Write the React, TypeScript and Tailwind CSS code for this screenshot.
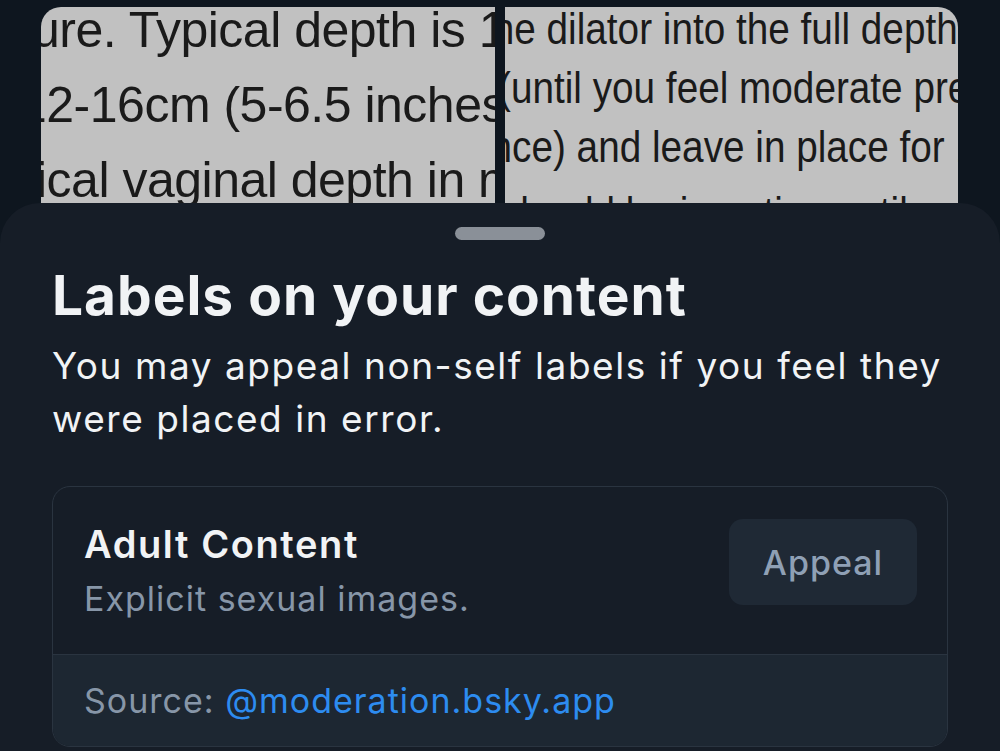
export default function App() {
  const leftLines = [
    { text: "ure. Typical depth is 12", ml: "ml-[-9px]" },
    { text: "12-16cm (5-6.5 inches)", ml: "ml-[-22px]" },
    { text: "ical vaginal depth in men", ml: "ml-[-5px]" },
  ];
  const rightLines = [
    { text: "the dilator into the full depth", ml: "ml-[-23px]" },
    { text: "(until you feel moderate pressure", ml: "ml-[-7px]" },
    { text: "ance) and leave in place for 1", ml: "ml-[-36px]" },
    { text: "should be inserting until only a", ml: "ml-[-4px] mt-[7px]" },
  ];

  return (
    <div className="h-[751px] w-[1000px] overflow-hidden bg-[#0e161f] font-['Inter',sans-serif]">
      {/* post images behind the sheet */}
      <div className="flex h-[203px] gap-[10px] pl-[41px] pr-[42px] pt-[7px]">
        <div className="h-[196px] flex-1 overflow-hidden rounded-tl-[20px] bg-[#c1c1c1] font-['Liberation_Sans',sans-serif] text-[50px] leading-[75px] tracking-[-0.5px] text-[#1a1a1a]">
          <div className="-mt-[14px]">
            {leftLines.map((l) => (
              <div key={l.text} className={`whitespace-nowrap ${l.ml}`}>
                {l.text}
              </div>
            ))}
          </div>
        </div>
        <div className="h-[196px] flex-1 overflow-hidden rounded-tr-[20px] bg-[#c1c1c1] font-['Liberation_Sans',sans-serif] text-[44px] leading-[59px] text-[#1a1a1a]">
          <div className="-mt-[8px]">
            {rightLines.map((l) => (
              <div key={l.text} className={`origin-left scale-x-[0.88] whitespace-nowrap ${l.ml}`}>
                {l.text}
              </div>
            ))}
          </div>
        </div>
      </div>

      {/* bottom sheet */}
      <div className="h-[548px] rounded-t-[40px] bg-[#161d27] px-[52px]">
        <div className="flex justify-center pt-[24px]">
          <div className="h-[13px] w-[90px] rounded-full bg-[#8a9098]" />
        </div>
        <h1 className="mt-[23px] text-[55px] font-bold leading-[64px] tracking-[1px] text-[#f1f3f5]">
          Labels on your content
        </h1>
        <p className="mt-[12px] text-[37px] leading-[53px] tracking-[1.55px] text-[#f1f3f5]">
          You may appeal non-self labels if you feel they were placed in error.
        </p>

        <div className="mt-[41px] overflow-hidden rounded-[18px] border border-[#2a3440]">
          <div className="flex h-[167px] items-start justify-between pl-[31px] pr-[30px] pt-[32px]">
            <div className="pt-[3px]">
              <div className="text-[38px] font-semibold leading-[44px] tracking-[1.6px] text-[#f1f3f5]">
                Adult Content
              </div>
              <div className="mt-[13px] text-[34px] leading-[40px] tracking-[1px] text-[#8796a8]">
                Explicit sexual images.
              </div>
            </div>
            <button className="flex h-[86px] w-[188px] items-center justify-center rounded-[14px] bg-[#1f2935] text-[34px] font-medium tracking-[1px] text-[#8fa0b5]">
              Appeal
            </button>
          </div>
          <div className="flex h-[92px] items-center border-t border-[#2a3440] bg-[#1d2732] pl-[31px] text-[34px] tracking-[1px] text-[#8796a8]">
            Source:&nbsp;<span className="text-[#2d8cf0]">@moderation.bsky.app</span>
          </div>
        </div>
      </div>
    </div>
  );
}
